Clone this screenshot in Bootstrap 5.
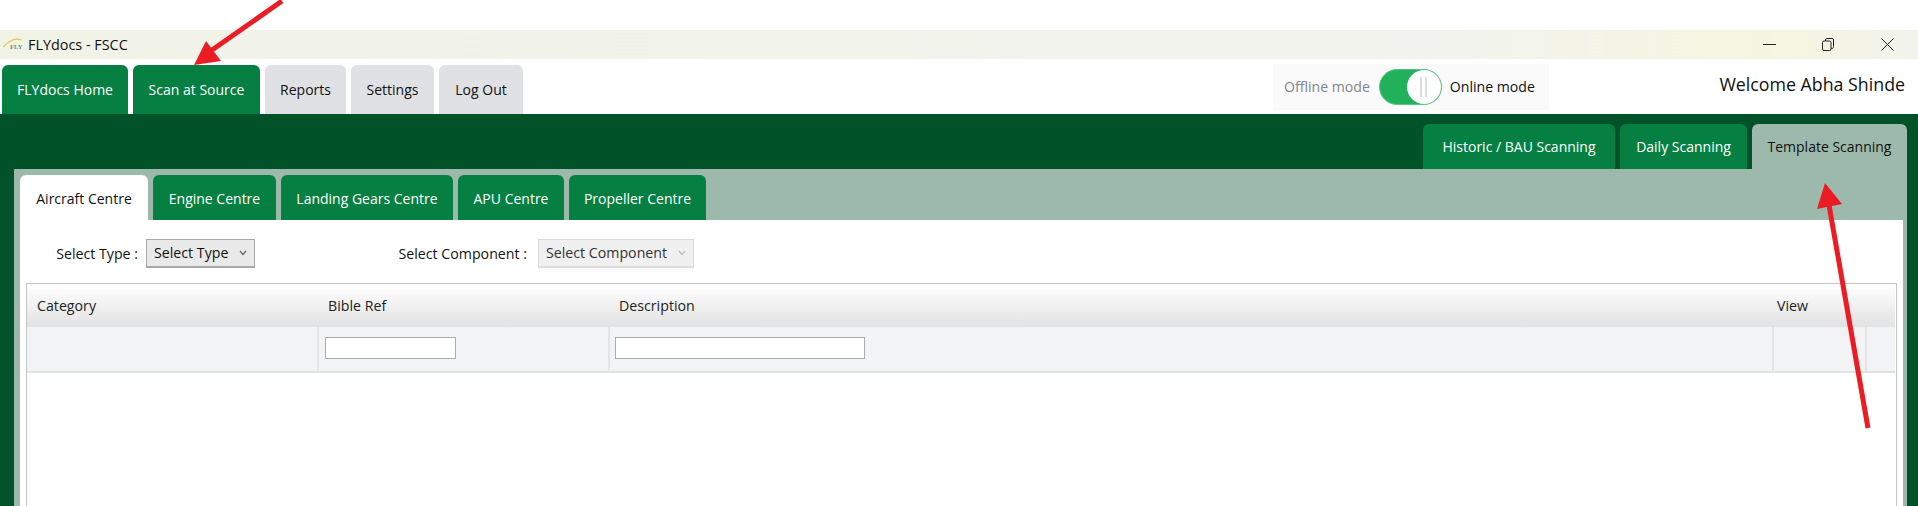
<!DOCTYPE html>
<html lang="en">
<head>
  <meta charset="UTF-8">
  <meta name="viewport" content="width=device-width, initial-scale=1">
  <link href="https://cdn.jsdelivr.net/npm/bootstrap@5.3.2/dist/css/bootstrap.min.css" rel="stylesheet">
  <script src="https://cdn.jsdelivr.net/npm/bootstrap@5.3.2/dist/js/bootstrap.bundle.min.js"></script>
  <title>FLYdocs - FSCC</title>
  <style>
    html, body { height: 506px; overflow: hidden; }
    body { font-family: "Open Sans", "Noto Sans", sans-serif; font-size: 14px; color: #111; background: #fff; position: relative; }
    .top-gap { height: 30px; }
    .title-bar { height: 29px; background: linear-gradient(90deg, #f1f3e7 0%, #f2f3ee 75%, #f5f5df 92%, #f2f3ec 100%); padding-left: 3px; font-size: 14.4px; }
    .logo-mark { margin-right: 1px; }
    .win-btns { gap: 46px; padding-right: 24px; }
    .head-row { height: 55px; }
    .main-tabs { gap: 5px; padding-left: 2px; }
    .tab-item { display: block; height: 49px; line-height: 49px; border-radius: 6px 6px 0 0; text-align: center; text-decoration: none; font-size: 14px; white-space: nowrap; }
    .tab-green { background: #058042; color: #fff; }
    .tab-grey { background: #e0e1e4; color: #111; }
    .w-home { width: 126px; } .w-scan { width: 127px; } .w-rep { width: 81px; } .w-set { width: 83px; } .w-log { width: 84px; }
    .mode-box { width: 276px; height: 46px; background: #fafafa; margin-top: 5px; margin-left: auto; padding-left: 11px; gap: 8px; font-size: 14.1px; }
    .mode-off { color: #80868b; }
    .switch-pill { width: 63px; height: 36px; border-radius: 18px; background: #20b15a; position: relative; border: 1px solid #5bc285; margin-left: 1px; }
    .switch-knob { position: absolute; right: 0; top: 0; width: 34px; height: 34px; border-radius: 50%; background: #fff; display: flex; align-items: center; justify-content: center; gap: 3px; }
    .switch-knob i { display: block; width: 2px; height: 20px; background: #dcdcdc; }
    .welcome { width: 369px; text-align: right; padding-right: 13px; font-size: 17.8px; padding-top: 12px; }
    .dark-area { height: 392px; background: #015229; padding: 10px 11px 0 14px; }
    .right-tabs { gap: 5px; height: 45px; }
    .w-hist { width: 192px; } .w-daily { width: 127px; } .w-tmpl { width: 155px; }
    .right-tabs .tab-item { height: 45px; line-height: 46px; }
    .tab-tmpl { background: #9db9ab; color: #111; }
    .tab-panel { background: #9db9ab; padding: 6px 4px 0 6px; height: 337px; }
    .inner-tabs { gap: 5px; height: 45px; }
    .inner-tabs .tab-item { height: 45px; line-height: 47px; }
    .tab-white { background: #fff; color: #111; }
    .w-air { width: 128px; } .w-eng { width: 123px; } .w-land { width: 172px; } .w-apu { width: 106px; } .w-prop { width: 137px; }
    .panel-body { background: #fff; height: 286px; padding: 19px 6px 0 6px; }
    .pick-row { height: 29px; font-size: 14.2px; margin-bottom: 15px; }
    .pick-label { margin-left: 29px; margin-right: 8px; width: 83px; text-align: right; white-space: nowrap; }
    .pick-label-b { width: 130px; margin-left: 142px; margin-right: 11px; }
    .pick-box { height: 29px; border: 1px solid #a8a8a8; border-bottom-width: 2px; background: #e9e9e9; padding: 0 7px; white-space: nowrap; }
    .pick-type { width: 109px; }
    .pick-comp { width: 156px; color: #333; background: #f0f0f0; border-color: #dcdcdc; }
    .grid-wrap { border: 1px solid #c6c6c6; border-bottom: 0; height: 223px; padding-right: 1px; }
    .grid-table { table-layout: fixed; width: 100%; margin: 0; border-collapse: collapse; font-size: 14.2px; }
    .grid-table th { height: 43px; padding: 0 0 0 10px; font-weight: 400; color: #222; background: linear-gradient(180deg, #fff 0%, #e2e2e2 100%); border: 0; vertical-align: middle; }
    .grid-table th:nth-child(4) { padding-left: 4px; }
    .grid-table td { height: 45px; padding: 0 0 2px 5px; background: #f2f3f5; border: 0; border-right: 2px solid #e3e4e6; border-bottom: 2px solid #e1e2e4; vertical-align: middle; }
    .grid-table td:last-child { border-right: 0; }
    .filter-a { width: 131px; margin-left: 1px; } .filter-b { width: 250px; }
    .filter-input { display: block; height: 22px; border: 1px solid #ababab; background: #fff; padding: 0; }
    .col-cat { width: 291px; } .col-bib { width: 291px; } .col-view { width: 93px; } .col-end { width: 29px; }
    .red-arrows { position: absolute; left: 0; top: 0; width: 1918px; height: 506px; pointer-events: none; }
  </style>
</head>
<body>
<div class="top-gap"></div>

<!-- window title bar -->
<div class="title-bar d-flex align-items-center justify-content-between">
  <div class="d-flex align-items-center gap-1">
    <svg class="logo-mark" width="20" height="16" viewBox="0 0 20 16">
      <path d="M.5 11C5 5 12 1.500 18.500 4" fill="none" stroke="#eec341" stroke-width="1.300"/>
      <text x="7" y="12.500" font-size="6.500" font-weight="700" fill="#5f9a7b" font-family="Liberation Serif, serif">FLY</text>
    </svg>
    <span>FLYdocs - FSCC</span>
  </div>
  <div class="win-btns d-flex align-items-center">
    <svg width="13" height="13" viewBox="0 0 13 13"><path d="M0 6.500H13" stroke="#222" stroke-width="1"/></svg>
    <svg width="13" height="13" viewBox="0 0 13 13"><rect x=".5" y="3" width="8.500" height="9.500" rx="1.500" fill="none" stroke="#222"/><path d="M3.500 3V2A1.500 1.500 0 0 1 5 .5H10A1.500 1.500 0 0 1 11.500 2V8.500A1.500 1.500 0 0 1 9 10" fill="none" stroke="#222"/></svg>
    <svg width="13" height="13" viewBox="0 0 13 13"><path d="M.5 .5L12.500 12.500M12.500 .5L.5 12.500" stroke="#222" stroke-width="1"/></svg>
  </div>
</div>

<!-- app tabs, mode switch, user -->
<div class="head-row d-flex">
  <nav class="main-tabs d-flex align-items-end">
    <a class="tab-item tab-green w-home" href="#">FLYdocs Home</a>
    <a class="tab-item tab-green w-scan" href="#">Scan at Source</a>
    <a class="tab-item tab-grey w-rep" href="#">Reports</a>
    <a class="tab-item tab-grey w-set" href="#">Settings</a>
    <a class="tab-item tab-grey w-log" href="#">Log Out</a>
  </nav>
  <div class="mode-box d-flex align-items-center">
    <span class="mode-off">Offline mode</span>
    <div class="switch-pill"><div class="switch-knob"><i></i><i></i></div></div>
    <span>Online mode</span>
  </div>
  <div class="welcome">Welcome Abha Shinde</div>
</div>

<div class="dark-area">
  <div class="right-tabs d-flex justify-content-end">
    <a class="tab-item tab-green w-hist" href="#">Historic / BAU Scanning</a>
    <a class="tab-item tab-green w-daily" href="#">Daily Scanning</a>
    <a class="tab-item tab-tmpl w-tmpl" href="#">Template Scanning</a>
  </div>
  <div class="tab-panel">
    <div class="inner-tabs d-flex">
      <a class="tab-item tab-white w-air" href="#">Aircraft Centre</a>
      <a class="tab-item tab-green w-eng" href="#">Engine Centre</a>
      <a class="tab-item tab-green w-land" href="#">Landing Gears Centre</a>
      <a class="tab-item tab-green w-apu" href="#">APU Centre</a>
      <a class="tab-item tab-green w-prop" href="#">Propeller Centre</a>
    </div>
    <div class="panel-body">
      <div class="pick-row d-flex align-items-center">
        <span class="pick-label">Select Type :</span>
        <div class="pick-box pick-type d-flex align-items-center justify-content-between">
          <span>Select Type</span>
          <svg width="8" height="6" viewBox="0 0 8 6"><path d="M1 1L4 4.500L7 1" fill="none" stroke="#666" stroke-width="1.200"/></svg>
        </div>
        <span class="pick-label pick-label-b">Select Component :</span>
        <div class="pick-box pick-comp d-flex align-items-center justify-content-between">
          <span>Select Component</span>
          <svg width="8" height="6" viewBox="0 0 8 6"><path d="M1 1L4 4.500L7 1" fill="none" stroke="#bbb" stroke-width="1.200"/></svg>
        </div>
      </div>
      <div class="grid-wrap">
        <table class="table grid-table">
          <colgroup>
            <col class="col-cat"><col class="col-bib"><col><col class="col-view"><col class="col-end">
          </colgroup>
          <thead>
            <tr><th>Category</th><th>Bible Ref</th><th>Description</th><th>View</th><th></th></tr>
          </thead>
          <tbody>
            <tr>
              <td></td>
              <td><input class="filter-input filter-a" type="text" aria-label="Bible Ref"></td>
              <td><input class="filter-input filter-b" type="text" aria-label="Description"></td>
              <td></td>
              <td></td>
            </tr>
          </tbody>
        </table>
      </div>
    </div>
  </div>
</div>

<!-- red annotation arrows drawn on top of the screenshot -->
<svg class="red-arrows" viewBox="0 0 1918 506">
  <path d="M282 1L212 50" stroke="#ec1c24" stroke-width="5" fill="none"/>
  <polygon points="194,65 206,41 221,61" fill="#ec1c24"/>
  <path d="M1868 428L1829 205" stroke="#ec1c24" stroke-width="5" fill="none"/>
  <polygon points="1825,183 1817,209 1842,204" fill="#ec1c24"/>
</svg>
</body>
</html>
